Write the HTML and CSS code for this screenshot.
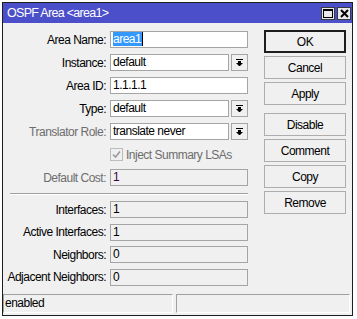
FILE: index.html
```html
<!DOCTYPE html>
<html lang="en">
<head>
  <meta charset="UTF-8">
  <title>OSPF Area</title>
  <link rel="stylesheet" href="styles.css">
</head>
<body>
  <div class="window">
    <div class="titlebar">
      <span class="title">OSPF Area &lt;area1&gt;</span>
      <div class="title-btns">
        <span class="tbtn">
          <svg width="10" height="9" viewBox="0 0 10 9"><rect x="0.5" y="0.5" width="9" height="8" fill="none" stroke="#000"/><rect x="0" y="0" width="10" height="2" fill="#000"/></svg>
        </span>
        <span class="tbtn">
          <svg width="9" height="9" viewBox="0 0 9 9"><path d="M1 1 L8 8 M8 1 L1 8" stroke="#000" stroke-width="2"/></svg>
        </span>
      </div>
    </div>

    <div class="body">
      <div class="form">
        <div class="group">
          <div class="row">
            <label>Area Name:</label>
            <div class="field"><span class="sel">area1</span></div>
          </div>
          <div class="row">
            <label>Instance:</label>
            <div class="field combo">default</div>
            <span class="drop"><svg width="7" height="7" viewBox="0 0 7 7"><rect x="0" y="0" width="7" height="1" fill="#000"/><rect x="2" y="2" width="3" height="2" fill="#000"/><path d="M0 4 L7 4 L3.5 7.5 Z" fill="#000"/></svg></span>
          </div>
          <div class="row">
            <label>Area ID:</label>
            <div class="field">1.1.1.1</div>
          </div>
          <div class="row">
            <label>Type:</label>
            <div class="field combo">default</div>
            <span class="drop"><svg width="7" height="7" viewBox="0 0 7 7"><rect x="0" y="0" width="7" height="1" fill="#000"/><rect x="2" y="2" width="3" height="2" fill="#000"/><path d="M0 4 L7 4 L3.5 7.5 Z" fill="#000"/></svg></span>
          </div>
          <div class="row">
            <label class="off">Translator Role:</label>
            <div class="field combo">translate never</div>
            <span class="drop"><svg width="7" height="7" viewBox="0 0 7 7"><rect x="0" y="0" width="7" height="1" fill="#000"/><rect x="2" y="2" width="3" height="2" fill="#000"/><path d="M0 4 L7 4 L3.5 7.5 Z" fill="#000"/></svg></span>
          </div>
          <div class="row check-row">
            <span class="checkbox"><svg width="9" height="9" viewBox="0 0 9 9"><path d="M1 4.5 L3.5 7 L8 1.5" fill="none" stroke="#9a9a9a" stroke-width="1.6"/></svg></span>
            <span class="check-label">Inject Summary LSAs</span>
          </div>
          <div class="row">
            <label class="off">Default Cost:</label>
            <div class="field ro cost">1</div>
          </div>
        </div>

        <div class="sep"></div>

        <div class="group tight">
          <div class="row">
            <label>Interfaces:</label>
            <div class="field ro">1</div>
          </div>
          <div class="row">
            <label>Active Interfaces:</label>
            <div class="field ro">1</div>
          </div>
          <div class="row">
            <label>Neighbors:</label>
            <div class="field ro">0</div>
          </div>
          <div class="row">
            <label>Adjacent Neighbors:</label>
            <div class="field ro">0</div>
          </div>
        </div>
      </div>

      <div class="buttons">
        <button class="btn default">OK</button>
        <button class="btn">Cancel</button>
        <button class="btn">Apply</button>
        <button class="btn spaced">Disable</button>
        <button class="btn">Comment</button>
        <button class="btn">Copy</button>
        <button class="btn">Remove</button>
      </div>
    </div>

    <div class="status">
      <div class="cell first">enabled</div>
      <div class="cell rest"></div>
    </div>
  </div>
</body>
</html>
```

FILE: styles.css
```css
body {
  margin: 0;
  background-color: #fff;
  font-family: "Liberation Sans", Arial, sans-serif;
  font-size: 12px;
  letter-spacing: -0.5px;
  color: #000;
}

.window {
  margin: 2px 0 0 2px;
  width: 351px;
  height: 314px;
  box-sizing: border-box;
  border: 1px solid #1e1e1e;
  background-color: #f0f0f0;
  display: flex;
  flex-direction: column;
  padding-bottom: 2px;
}

.titlebar {
  height: 20px;
  background-color: #4b4fc9;
  display: flex;
  align-items: center;
  justify-content: space-between;
  padding-left: 4px;
}

.title {
  color: #fff;
  font-size: 12.5px;
  letter-spacing: -0.7px;
}

.title-btns {
  display: flex;
  gap: 2px;
  margin-right: 1px;
  margin-top: 1px;
}

.tbtn {
  width: 14px;
  height: 13px;
  box-sizing: border-box;
  border: 1px solid #3a3a3a;
  background-color: #eaeaea;
  display: flex;
  align-items: center;
  justify-content: center;
}

.body {
  display: flex;
  justify-content: space-between;
  padding: 7px 6px 0 3px;
}

.form {
  width: 242px;
  padding-top: 1px;
}

.group {
  display: flex;
  flex-direction: column;
  gap: 6px;
}

.group.tight {
  gap: 5.5px;
}

.row {
  display: flex;
  align-items: center;
  height: 17px;
}

.row label {
  width: 100px;
  margin-right: 4px;
  text-align: right;
  white-space: nowrap;
}

.row label.off {
  color: #6d6d6d;
}

.field {
  width: 138px;
  height: 17px;
  box-sizing: border-box;
  border: 1px solid #a5a5a5;
  background-color: #fff;
  padding: 0 2px;
  line-height: 15px;
  white-space: nowrap;
}

.field.combo {
  width: 119px;
}

.field.ro {
  background-color: #f0f0f0;
}

.field.cost {
  color: #400040;
}

.sel {
  background-color: #3399ff;
  color: #fff;
  padding: 0 1px 0 0;
  border-right: 1px solid #000;
}

.drop {
  width: 17px;
  height: 17px;
  box-sizing: border-box;
  margin-left: 2px;
  border: 1px solid #a5a5a5;
  background-color: #f0f0f0;
  display: flex;
  align-items: center;
  justify-content: center;
}

.check-row {
  padding-left: 104px;
}

.checkbox {
  width: 13px;
  height: 13px;
  box-sizing: border-box;
  border: 1px solid #bcbcbc;
  background-color: #f0f0f0;
  display: flex;
  align-items: center;
  justify-content: center;
  margin-right: 3px;
}

.check-label {
  color: #6d6d6d;
}

.sep {
  margin: 7px 0 6px 4px;
  height: 0;
  border-top: 1px solid #a0a0a0;
  border-bottom: 1px solid #fff;
}

.buttons {
  width: 82px;
  display: flex;
  flex-direction: column;
  gap: 3px;
}

.btn {
  height: 23px;
  box-sizing: border-box;
  border: 1px solid #adadad;
  background-color: #f0f0f0;
  font-family: inherit;
  font-size: 12px;
  letter-spacing: -0.5px;
  color: #000;
  padding: 0;
}

.btn.default {
  border: 2px solid #1e1e1e;
}

.btn.spaced {
  margin-top: 5px;
}

.status {
  margin-top: auto;
  height: 19px;
  display: flex;
  gap: 3px;
  padding-right: 2px;
}

.cell {
  box-sizing: border-box;
  border-top: 1px solid #a0a0a0;
  border-left: 1px solid #a0a0a0;
  border-right: 1px solid #fff;
  border-bottom: 1px solid #fff;
  line-height: 17px;
  padding-left: 1px;
}

.cell.first {
  width: 170px;
}

.cell.rest {
  flex: 1;
}
```
